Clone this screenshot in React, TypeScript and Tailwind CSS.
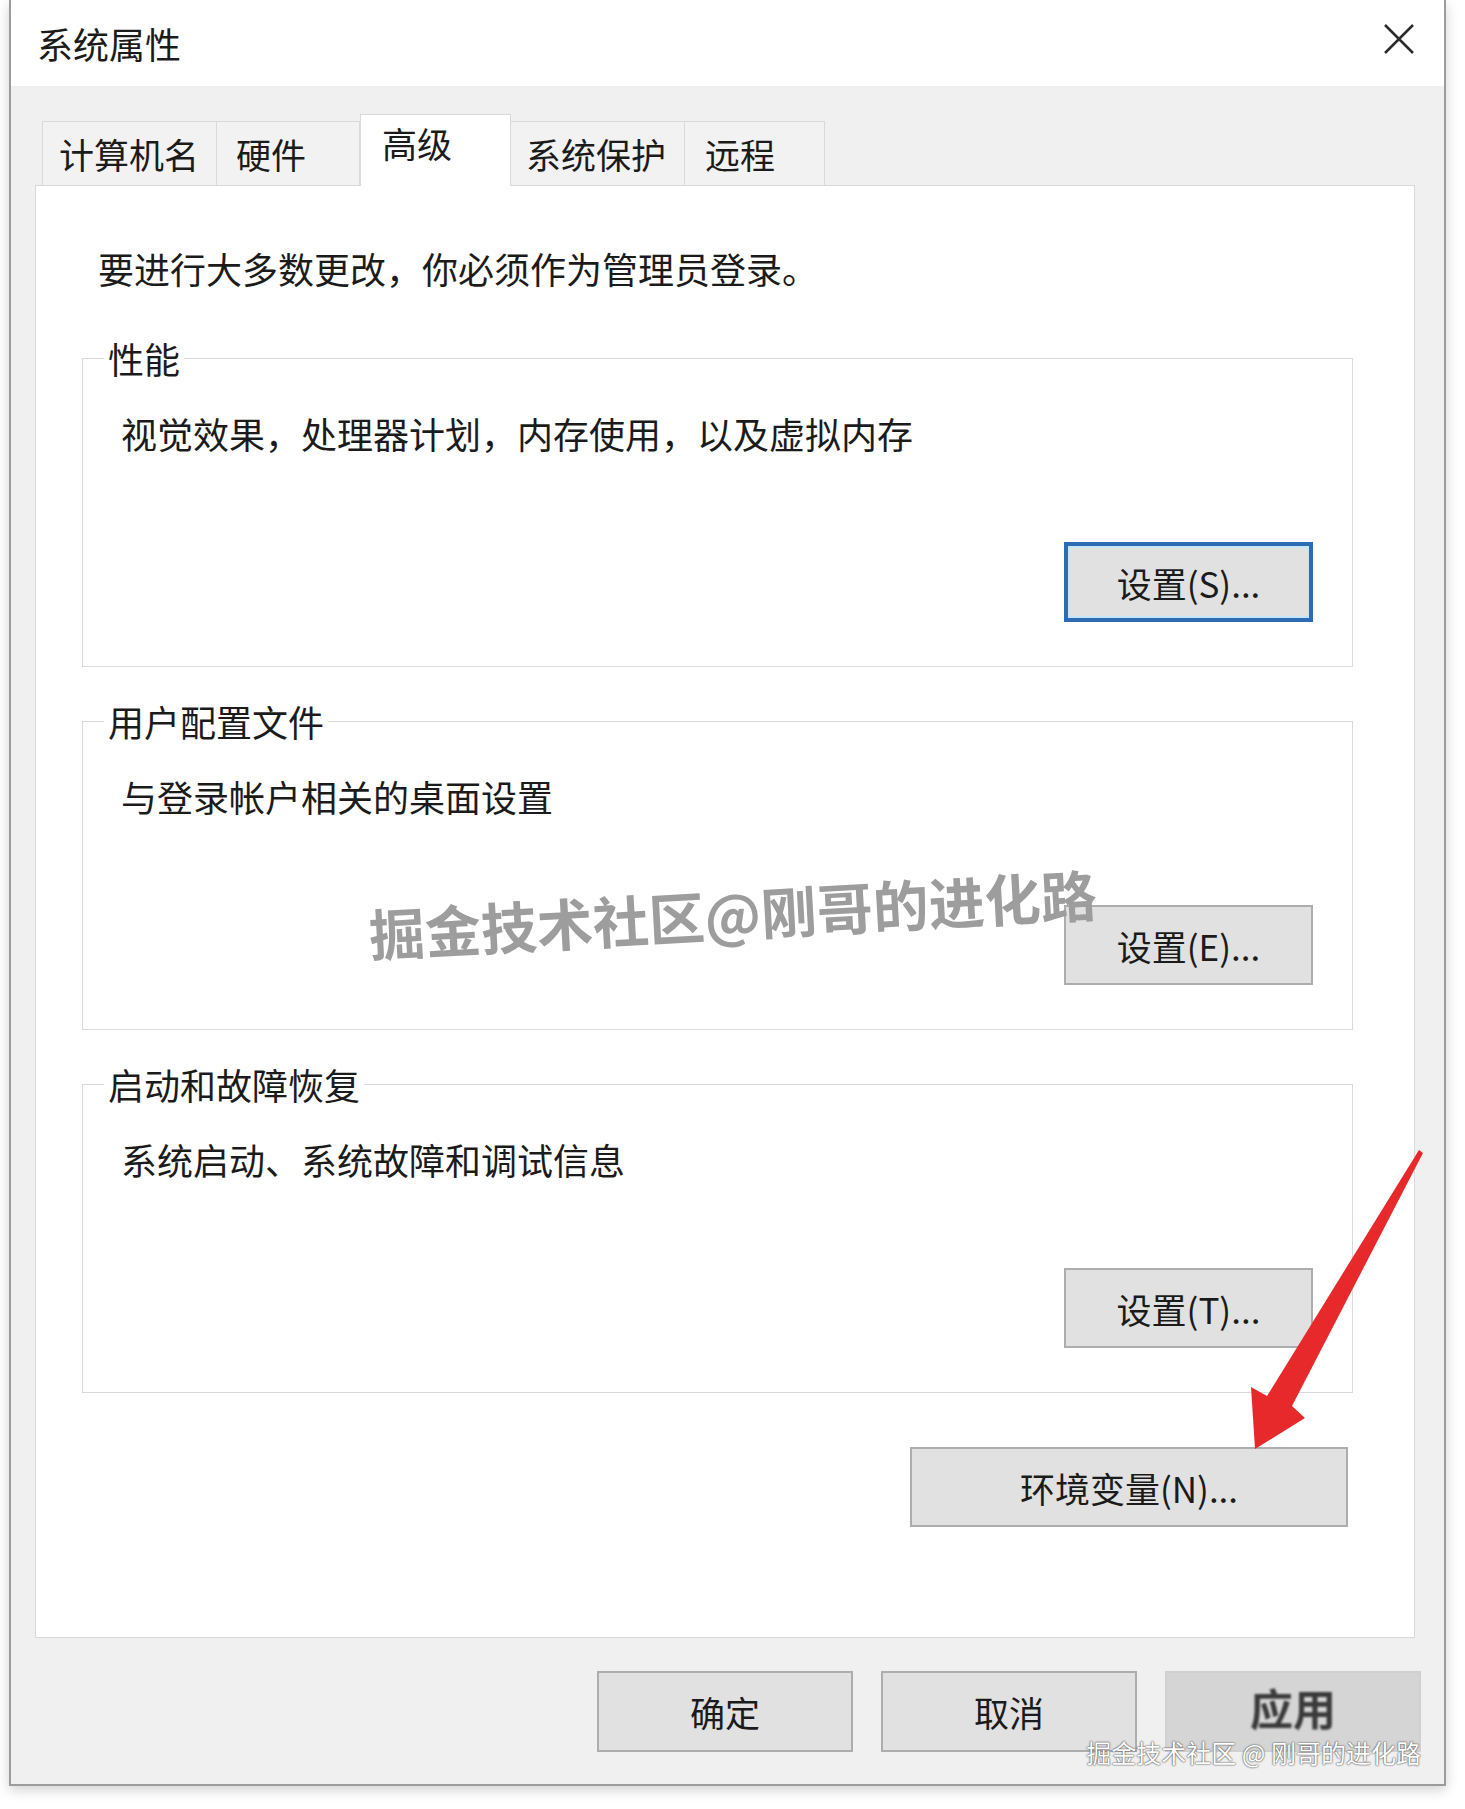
import React from "react";

type BtnProps = {
  children: React.ReactNode;
  focused?: boolean;
  className?: string;
};

const Btn = ({ children, focused = false, className = "" }: BtnProps) => (
  <button
    className={`flex items-center justify-center bg-[#e1e1e1] text-[35px] leading-none text-[#1b1b1b] ${
      focused
        ? "border-[4px] border-[#2d6cb4] shadow-[inset_0_0_0_2px_#c4e6f8]"
        : "border-2 border-[#adadad]"
    } ${className}`}
  >
    {children}
  </button>
);

const Group = ({
  title,
  desc,
  button,
  focused,
  className = "",
}: {
  title: string;
  desc: string;
  button: string;
  focused?: boolean;
  className?: string;
}) => (
  <div className={`flex h-[309px] flex-col border border-[#d9d9d9] ${className}`}>
    <span className="-mt-[21px] ml-[21px] w-fit bg-white px-[4px] text-[36px] leading-[40px] text-[#1b1b1b]">
      {title}
    </span>
    <p className="mt-[35px] pl-[38px] text-[36px] leading-[40px] text-[#1b1b1b]">{desc}</p>
    <Btn focused={focused} className="mt-auto mb-[44px] mr-[39px] h-[80px] w-[249px] self-end">
      {button}
    </Btn>
  </div>
);

const tabs = [
  { label: "计算机名", w: "w-[175px] border-l pl-[16px]" },
  { label: "硬件", w: "w-[143px] pl-[19px]" },
  { label: "高级", w: "w-[151px] pl-[21px]", active: true },
  { label: "系统保护", w: "w-[174px] pl-[15px]" },
  { label: "远程", w: "w-[140px] pl-[20px]" },
];

export default function App() {
  return (
    <div className="relative h-[1809px] w-[1465px] overflow-hidden bg-white font-['Noto_Sans_CJK_SC',sans-serif]">
      <div className="ml-[9px] flex h-[1786px] w-[1437px] flex-col border-x-2 border-b-2 border-[#9c9c9c] shadow-[0_4px_12px_rgba(0,0,0,0.18)]">
        {/* title bar */}
        <div className="flex h-[86px] shrink-0 items-center justify-between bg-white pl-[26px] pr-[29px]">
          <span className="text-[36px] leading-[40px] text-[#1b1b1b]">系统属性</span>
          <svg width="32" height="32" viewBox="0 0 32 32" className="-mt-[8px]">
            <path d="M2 2 L30 30 M30 2 L2 30" stroke="#2b2b2b" strokeWidth="2.5" />
          </svg>
        </div>

        {/* body */}
        <div className="flex flex-1 flex-col bg-[#f0f0f0]">
          <div className="ml-[31px] mt-[28px] flex items-end">
            {tabs.map((t) =>
              t.active ? (
                <div
                  key={t.label}
                  className={`relative z-10 -mb-px h-[72px] border-x border-t border-[#d9d9d9] bg-white pt-[8px] text-[35px] leading-[40px] text-[#1b1b1b] ${t.w}`}
                >
                  {t.label}
                </div>
              ) : (
                <div
                  key={t.label}
                  className={`h-[64px] border-r border-t border-[#d9d9d9] bg-[#f2f2f2] pt-[12px] text-[35px] leading-[40px] text-[#1b1b1b] ${t.w}`}
                >
                  {t.label}
                </div>
              )
            )}
          </div>

          {/* tab panel */}
          <div className="ml-[24px] mr-[29px] flex h-[1453px] flex-col border border-[#d9d9d9] bg-white pt-[62px]">
            <p className="pl-[62px] text-[36px] leading-[40px] text-[#1b1b1b]">
              要进行大多数更改，你必须作为管理员登录。
            </p>
            <Group
              className="ml-[46px] mr-[61px] mt-[70px]"
              title="性能"
              desc="视觉效果，处理器计划，内存使用，以及虚拟内存"
              button="设置(S)..."
              focused
            />
            <Group
              className="ml-[46px] mr-[61px] mt-[54px]"
              title="用户配置文件"
              desc="与登录帐户相关的桌面设置"
              button="设置(E)..."
            />
            <Group
              className="ml-[46px] mr-[61px] mt-[54px]"
              title="启动和故障恢复"
              desc="系统启动、系统故障和调试信息"
              button="设置(T)..."
            />
            <Btn className="mr-[66px] mt-[54px] h-[80px] w-[438px] self-end">环境变量(N)...</Btn>
          </div>

          <div className="mr-[23px] mt-[33px] flex justify-end gap-[28px]">
            <Btn className="h-[81px] w-[256px]">确定</Btn>
            <Btn className="h-[81px] w-[256px]">取消</Btn>
            <button className="flex h-[81px] w-[256px] items-center justify-center border-2 border-[#d0d0d0] bg-[#d5d5d5]">
              <span className="-mt-[8px] text-[43px] font-bold leading-none text-[#3a3a3a] blur-[1px]">应用</span>
            </button>
          </div>
        </div>
      </div>

      {/* watermark */}
      <div className="absolute left-[369px] top-[905px] origin-left -rotate-[3.2deg] whitespace-nowrap text-[56px] font-bold leading-[56px] text-[#9d9d9d]">
        掘金技术社区@刚哥的进化路
      </div>
      <div className="absolute right-[44px] top-[1737px] whitespace-nowrap text-[25px] leading-[30px] text-white [text-shadow:0_0_2px_#4a4a4a,0_0_1px_#4a4a4a]">
        掘金技术社区 @ 刚哥的进化路
      </div>

      {/* red arrow */}
      <svg
        className="pointer-events-none absolute left-0 top-0"
        width="1465"
        height="1809"
        viewBox="0 0 1465 1809"
      >
        <polygon
          points="1419,1150 1423,1153 1292,1406 1305,1418 1255,1449 1251,1387 1267,1396"
          fill="#e8292b"
        />
      </svg>
    </div>
  );
}
